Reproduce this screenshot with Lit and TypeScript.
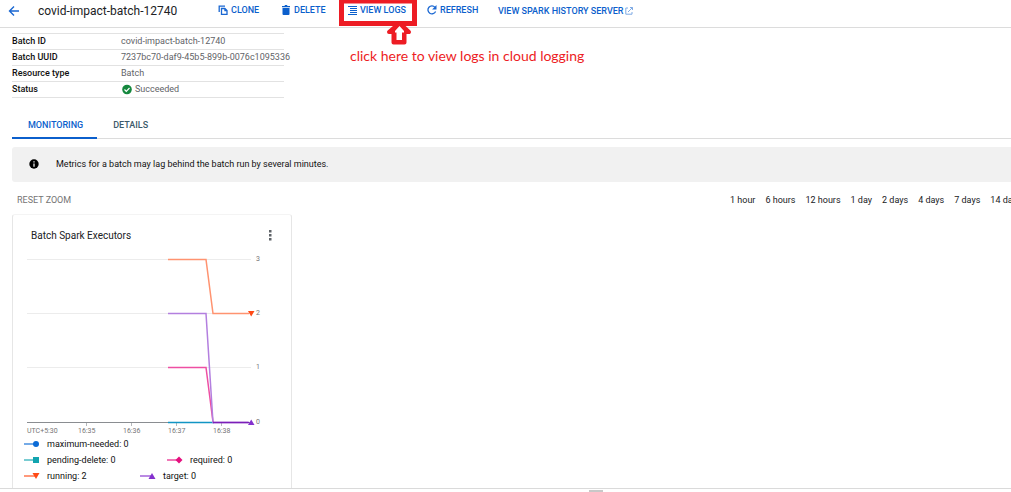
import { LitElement, html, css, svg } from "lit";
import { customElement } from "lit/decorators.js";

const details = [
  ["Batch ID", "covid-impact-batch-12740"],
  ["Batch UUID", "7237bc70-daf9-45b5-899b-0076c1095336"],
  ["Resource type", "Batch"],
];

const ranges = ["1 hour", "6 hours", "12 hours", "1 day", "2 days", "4 days", "7 days", "14 days"];

const marks: Record<string, { color: string; shape: unknown }> = {
  "maximum-needed": { color: "#0b6bd6", shape: svg`<circle cx="12" cy="5" r="3" />` },
  "pending-delete": { color: "#12a4af", shape: svg`<rect x="9" y="2" width="6" height="6" />` },
  required: { color: "#e5107f", shape: svg`<path d="M12 1.5 15.5 5 12 8.5 8.5 5z" />` },
  running: { color: "#ff4a16", shape: svg`<path d="M8.5 2h7L12 8z" />` },
  target: { color: "#8430ce", shape: svg`<path d="M8.5 8h7L12 2z" />` },
};

@customElement("spark-chart")
export class SparkChart extends LitElement {
  static styles = css`
    :host { display: block; }
    svg { display: block; width: 100%; height: auto; overflow: visible; }
    .axis { font: 7px Roboto, sans-serif; fill: #757575; }
  `;

  render() {
    const ys = [10, 64, 118];
    return html`<svg viewBox="0 0 280 187" role="img" aria-label="Batch Spark Executors chart">
      ${ys.map((y) => svg`<path d="M15 ${y + 0.5}H239" stroke="#ececec" />`)}
      <path d="M15 173.5H239" stroke="#8a8d91" />
      ${[74, 119, 164, 209].map((x) => svg`<path d="M${x + 0.5} 174v3" stroke="#b5b8bb" />`)}
      <g fill="none" stroke-width="1.5">
        <path d="M156 173.5H202" stroke="#1295c4" />
        <path d="M156 118.5H194L201 173" stroke="#ee4fa3" />
        <path d="M156 64.5H194L201 173.5H236" stroke="#b37fdf" />
        <path d="M201 173.5H237" stroke="#7b1fb8" />
        <path d="M156 10.5H194L201 64.5H237" stroke="#ff9370" />
      </g>
      <path d="M236 62h6.5L239.2 67.5z" fill="#ff4a16" />
      <path d="M236 176h6.5L239.2 170.5z" fill="#8430ce" />
      ${["3", "2", "1", "0"].map((t, i) => svg`<text class="axis" x="244" y="${12 + i * 54 + (i === 3 ? 1 : 0)}">${t}</text>`)}
      <text class="axis" x="15" y="184">UTC+5:30</text>
      ${["16:35", "16:36", "16:37", "16:38"].map((t, i) => svg`<text class="axis" x="${66 + i * 45}" y="184">${t}</text>`)}
    </svg>`;
  }
}

@customElement("app-root")
export class AppRoot extends LitElement {
  static styles = css`
    :host {
      display: flex; flex-direction: column; height: 100vh; overflow: hidden;
      background: #fff; color: #202124; font: 9px/16px Roboto, sans-serif;
    }
    * { box-sizing: border-box; }
    button { font: inherit; color: inherit; background: none; border: 0; padding: 0; margin: 0; white-space: nowrap; }
    a { color: inherit; text-decoration: none; }
    svg { display: block; flex: none; }
    .bar { display: flex; flex: none; align-items: flex-start; height: 28px; padding: 2px 8px; border-bottom: 1px solid #dcdcdc; color: #0b5fcc; }
    .back { padding-top: 3px; }
    h1 { margin: 0 0 0 18px; width: 180px; font-size: 12px; line-height: 18px; font-weight: 400; color: #202124; }
    .act { display: flex; align-items: center; gap: 3px; height: 16px; font-weight: 500; white-space: nowrap; }
    .clone { width: 63px; }
    .delete { width: 67px; }
    .logs { position: relative; width: 79px; }
    .refresh { width: 71px; }
    .server { gap: 1px; height: 18px; }
    .callout { position: absolute; left: -9px; top: -2px; pointer-events: none; }
    .note { position: absolute; left: 2px; top: 45px; font: 14px/18px Lato, sans-serif; color: #ed1c24; white-space: nowrap; }
    main { flex: 1; min-height: 0; overflow: hidden; padding: 5px 0 0 12px; }
    table { width: 272px; table-layout: fixed; border-collapse: collapse; border-top: 1px solid #e2e2e2; }
    th, td { height: 16px; padding: 0; line-height: 14px; vertical-align: top; text-align: left; border-bottom: 1px solid #e2e2e2; white-space: nowrap; }
    th { width: 109px; font-weight: 500; color: #111; }
    td { color: #5f6368; }
    .ok { display: flex; align-items: center; gap: 3px; }
    .tabs { display: flex; margin-top: 14px; height: 27px; border-bottom: 1px solid #dcdcdc; }
    .tab { padding: 0 14px 0 16px; height: 27px; font-weight: 500; color: #3c5a6b; border-bottom: 2px solid transparent; }
    .tab.on { color: #0b5fcc; border-color: #0b5fcc; }
    .info { display: flex; align-items: center; gap: 17px; height: 35px; margin-top: 8px; padding: 0 0 1px 17px; background: #f1f1f1; border-radius: 3px 0 0 3px; color: #111; }
    .tools { display: flex; justify-content: space-between; margin: 10px 0 6px; padding-left: 5px; }
    .reset { color: #757575; }
    .ranges { display: flex; gap: 10px; flex: 0 0 281px; overflow: hidden; }
    .card { width: 280px; height: 300px; border: 1px solid #e6e6e6; border-top-color: #f4f4f4; border-radius: 3px 3px 0 0; }
    .head { display: flex; justify-content: space-between; align-items: center; padding: 13px 16px 0 18px; }
    h2 { margin: 0; font-size: 10px; line-height: 16px; font-weight: 400; }
    .chart { margin: 5px -1px 0; }
    .legend { display: flex; flex-wrap: wrap; padding: 0 11px; color: #111; }
    .key { display: flex; align-items: center; gap: 7px; }
    .key.full { width: 100%; }
    .key.wide { width: 143px; }
    .key.mid { width: 116px; }
    .split { flex: none; display: flex; justify-content: center; height: 4px; border-top: 1px solid #dadada; padding: 1px 0 0 181px; }
    .grip { width: 14px; height: 2px; background: #c8c8c8; }
  `;

  key(name: string, value: number, cls: string) {
    const m = marks[name];
    return html`<div class="key ${cls}">
      <svg width="16" height="10" fill=${m.color}><path d="M0 5h12" stroke=${m.color} stroke-width="1.5" opacity=".75" />${m.shape}</svg>
      <span>${name}: ${value}</span></div>`;
  }

  render() {
    return html`
      <header class="bar">
        <button class="back" aria-label="Back">
          <svg width="12" height="12" fill="none" stroke="#1a67d2" stroke-width="1.4"><path d="M11 6H2M6 1.5 1.5 6 6 10.5" /></svg>
        </button>
        <h1>covid-impact-batch-12740</h1>
        <button class="act clone">
          <svg width="10" height="10" fill="none" stroke="#1a67d2" stroke-width="1.3"><path d="M1.2 7V1.2H7" /><path d="M3.5 3.5H6.8L9 5.6V9.4H3.5z" /><path d="M6.3 3.5H7L9 5.5V6.2H6.3z" fill="#1a67d2" stroke="none" /></svg>CLONE
        </button>
        <button class="act delete">
          <svg width="10" height="10" fill="#0b5fcc"><path d="M1 1h2.5l.5-1h2l.5 1H9v1.2H1zM1.5 3h7v6q0 1-1 1h-5q-1 0-1-1z" /></svg>DELETE
        </button>
        <div class="logs">
          <button class="act"><svg width="9" height="9" stroke="#0b5fcc" stroke-width="1"><path d="M0 .5h9M2 2.5h7M2 4.5h7M2 6.5h7M0 8.5h9" /></svg>VIEW LOGS</button>
          <svg class="callout" width="78" height="46">
            <path d="M2.5 0V23.5H75.5V0M0 1H78" fill="none" stroke="#ed1c24" stroke-width="5" />
            <path d="M60.5 23 70 32H65.5V42.5H54.5V32H50z" fill="#ed1c24" stroke="#ed1c24" stroke-width="4" stroke-linejoin="round" />
            <path d="M60.5 26 65 31V32.500H63V40H57.500V32.500H56V31z" fill="#fff" />
          </svg>
          <span class="note">click here to view logs in cloud logging</span>
        </div>
        <button class="act refresh">
          <svg width="10" height="10" fill="none" stroke="#1a67d2" stroke-width="1.3"><path d="M8.6 6.5A4 4 0 1 1 8 2.3" /><path d="M9.5 0V4.4H5.1z" fill="#1a67d2" stroke="none" /></svg>REFRESH
        </button>
        <a class="act server" href="#">VIEW SPARK HISTORY SERVER
          <svg width="8" height="8" fill="none" stroke="#7faae4"><path d="M3 1H.8v6.2h6.200V5M5 .5h2.500V3M7.500.5 3 5" /></svg>
        </a>
      </header>
      <main>
        <table>
          ${details.map(([k, v]) => html`<tr><th scope="row">${k}</th><td>${v}</td></tr>`)}
          <tr><th scope="row">Status</th><td><span class="ok">
            <svg width="11" height="11"><circle cx="6" cy="5.5" r="4.8" fill="#15883e" /><path d="M3.5 5.5 5.3 7.3 8.5 4" fill="none" stroke="#fff" stroke-width="1.2" /></svg>Succeeded</span></td></tr>
        </table>
        <nav class="tabs"><button class="tab on">MONITORING</button><button class="tab">DETAILS</button></nav>
        <div class="info">
          <svg width="10" height="10"><circle cx="5" cy="5" r="4.7" fill="#000" /><path d="M5 2.2v1.2M5 4.4v3.4" stroke="#fff" stroke-width="1.2" /></svg>
          <span>Metrics for a batch may lag behind the batch run by several minutes.</span>
        </div>
        <div class="tools">
          <button class="reset">RESET ZOOM</button>
          <div class="ranges">${ranges.map((r) => html`<button>${r}</button>`)}</div>
        </div>
        <section class="card">
          <div class="head"><h2>Batch Spark Executors</h2>
            <button aria-label="More options"><svg width="10" height="12" fill="#5f6368"><path d="M4 0h2.5v2.5H4zM4 4h2.5v2.5H4zM4 8h2.5v2.5H4z" /></svg></button>
          </div>
          <spark-chart class="chart"></spark-chart>
          <div class="legend">
            ${this.key("maximum-needed", 0, "full")}
            ${this.key("pending-delete", 0, "wide")}${this.key("required", 0, "")}
            ${this.key("running", 2, "mid")}${this.key("target", 0, "")}
          </div>
        </section>
      </main>
      <div class="split"><div class="grip"></div></div>
    `;
  }
}
